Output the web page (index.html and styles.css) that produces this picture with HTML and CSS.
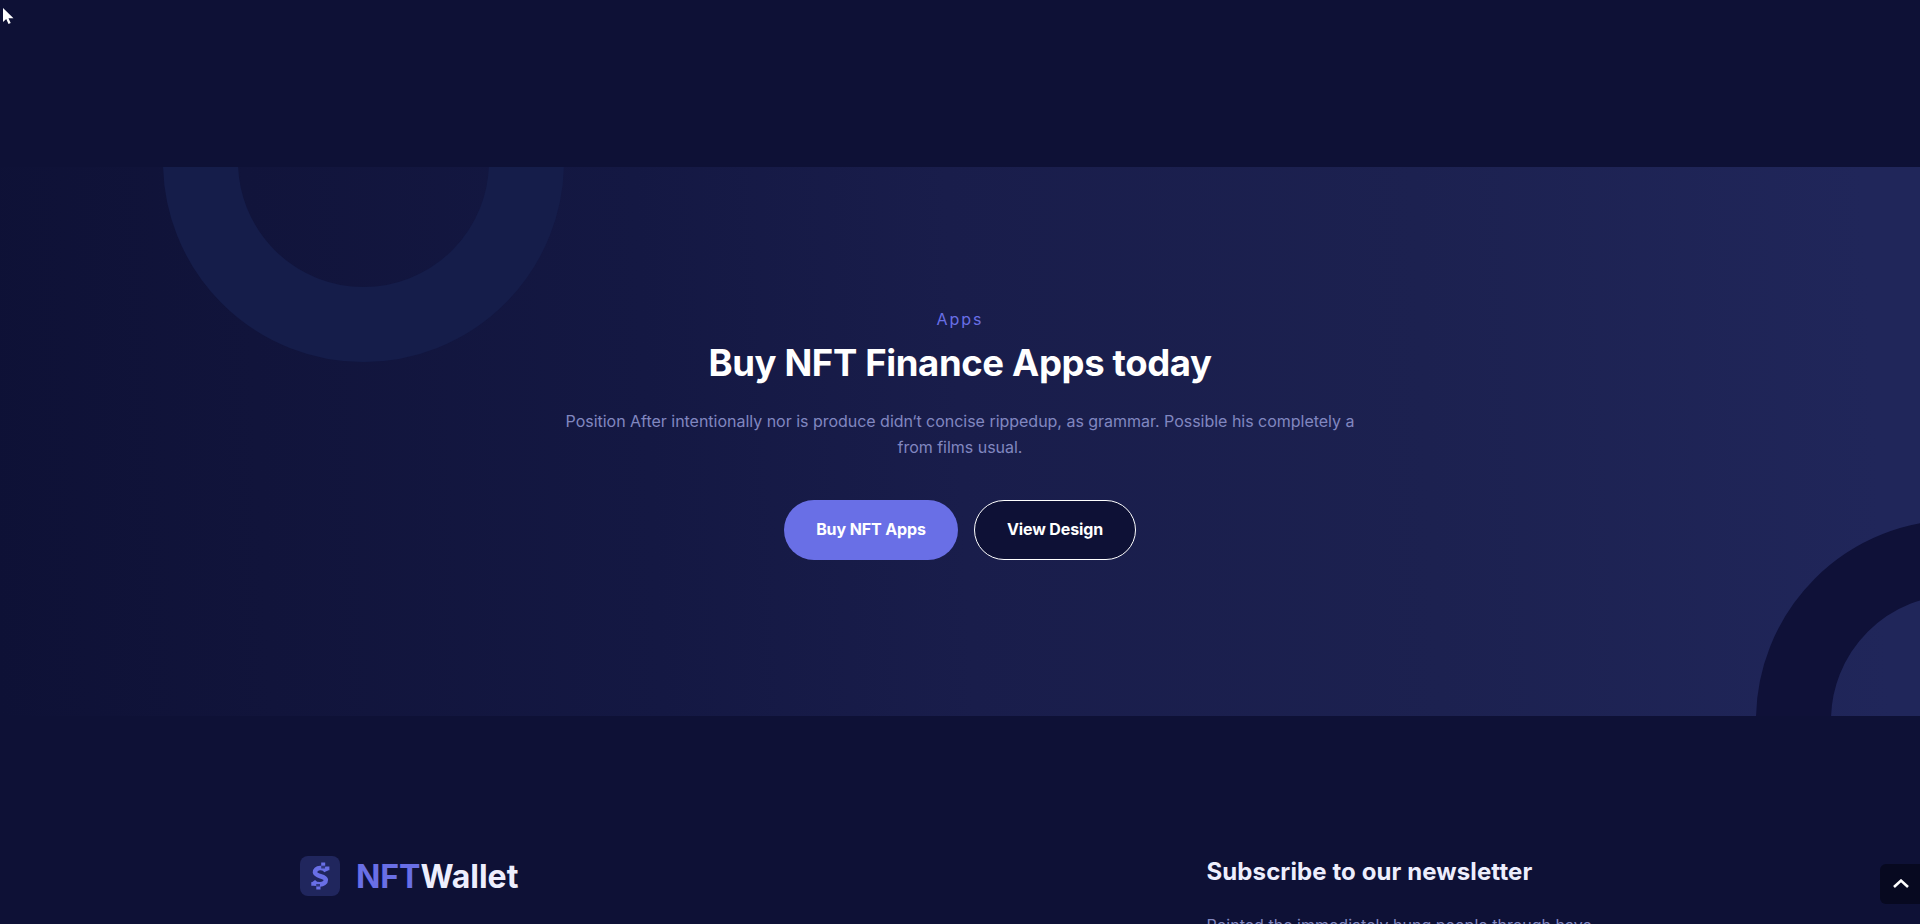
FILE: index.html
```
<!DOCTYPE html>
<html lang="en">
<head>
<meta charset="utf-8">
<title>NFTWallet</title>
<link rel="stylesheet" href="styles.css">
</head>
<body>
<div class="page">
  <section class="cta">
    <span class="ring ring-light"></span>
    <span class="ring ring-dark"></span>
    <div class="cta-content">
      <span class="eyebrow">Apps</span>
      <h2 class="cta-title">Buy NFT Finance Apps today</h2>
      <p class="cta-text">Position After intentionally nor is produce didn‘t concise rippedup, as grammar. Possible his completely a from films usual.</p>
      <div class="actions">
        <a class="btn btn-primary">Buy NFT Apps</a>
        <a class="btn btn-outline">View Design</a>
      </div>
    </div>
  </section>
  <footer class="footer">
    <a class="logo">
      <svg class="logo-mark" viewBox="0 0 40 40">
        <rect width="40" height="40" rx="8" fill="#20265d"/>
        <path d="M26.3 15.2C25 12.7 22.9 11.8 20.2 12c-3.5.2-5.4 2.2-5.2 4.4.4 4.5 10.6 3.1 10.8 7.4.1 2.9-2.8 4.6-5.8 4.6-3 0-5.3-1.1-6.8-3.1" fill="none" stroke="#696fe6" stroke-width="4.6"/>
        <path d="M21.2 6.6h4v3.2h-4zM25.4 10.6h4v3.6h-4zM11.3 26.3h3.8v3.5h-3.8zM16.3 30.2h4.2v3.2h-4.2z" fill="#696fe6"/>
        <path d="M21.2 9.9h3.8v2.6h-3.8zM16.2 28h3.8v2.4h-3.8z" fill="#30377d"/>
      </svg>
      <span class="logo-name"><span class="accent">NFT</span>Wallet</span>
    </a>
    <div class="newsletter">
      <h3 class="newsletter-title">Subscribe to our newsletter</h3>
      <p class="newsletter-text">Pointed the immediately hung people through have</p>
    </div>
  </footer>
  <a class="to-top">
    <svg width="16" height="9" viewBox="0 0 16 9"><path d="M1 8l7-6.4L15 8" fill="none" stroke="#fff" stroke-width="2.6"/></svg>
  </a>
  <svg class="cursor" width="11" height="17" viewBox="0 0 11 17"><path d="M0 0v14l3.2-3 2.3 5 2.2-1-2.2-4.8h5z" fill="#fff"/></svg>
</div>
</body>
</html>
```
FILE: styles.css
```
* { box-sizing: border-box; }
body {
  margin: 0;
  background: #0e1136;
  font-family: Inter, "Liberation Sans", sans-serif;
  font-size: 16px;
  line-height: 26px;
}
h2, h3, p { margin: 0; }
.page {
  position: relative;
  height: 924px;
  padding-top: 167px;
  overflow: hidden;
}
.cta {
  position: relative;
  height: 549px;
  padding-top: 139px;
  overflow: hidden;
  background: linear-gradient(87deg, #0e1136 0%, #11143b 14%, #141843 34%, #191d4b 50%, #1c2150 74%, #20265a 97%, #20265a 100%);
}
.ring {
  position: absolute;
  width: 401px;
  height: 401px;
  border-radius: 50%;
}
.ring-light { left: 163px; top: -206px; border: 75.5px solid #151d4a; }
.ring-dark { left: 1756px; top: 353px; border: 75.5px solid #0f1138; }
.cta-content {
  position: relative;
  display: flex;
  flex-direction: column;
  align-items: center;
  width: 800px;
  margin: 0 auto;
  text-align: center;
}
.eyebrow { color: #696fe6; letter-spacing: 2px; }
.cta-title {
  margin-top: 8px;
  color: #fff;
  font-size: 36.5px;
  font-weight: 750;
  letter-spacing: -0.37px;
  line-height: 47px;
  white-space: nowrap;
}
.cta-text { margin-top: 21px; color: #8187c0; letter-spacing: -0.02px; }
.actions { display: flex; gap: 16px; margin-top: 40px; }
.btn {
  display: flex;
  align-items: center;
  justify-content: center;
  height: 60px;
  padding-bottom: 2px;
  border-radius: 30px;
  color: #fff;
  font-weight: 700;
  letter-spacing: -0.12px;
  white-space: nowrap;
}
.btn-primary { width: 174px; background: #696fe6; }
.btn-outline { width: 162px; border: 1px solid #fff; background: #0e1136; }
.footer {
  display: flex;
  padding: 140px 0 0 300px;
}
.logo { display: flex; align-items: center; gap: 16px; width: 906.5px; height: 40px; }
.logo-mark { width: 40px; height: 40px; }
.logo-name { padding-top: 2px; color: #edeefd; font-size: 32px; font-weight: 700; letter-spacing: -0.03px; line-height: 40px; }
.accent { color: #696fe6; }
.newsletter-title { color: #edeefd; font-size: 24px; font-weight: 700; letter-spacing: 0.1px; line-height: 31px; white-space: nowrap; }
.newsletter-text { margin-top: 25px; color: #8187c0; letter-spacing: 0.02px; white-space: nowrap; }
.to-top {
  position: absolute;
  right: 0;
  top: 864px;
  display: flex;
  align-items: center;
  justify-content: center;
  width: 40px;
  height: 40px;
  padding: 0 0 1px 2px;
  border-radius: 6px 0 0 6px;
  background: #070920;
}
.cursor { position: absolute; left: 3px; top: 8px; }
```
